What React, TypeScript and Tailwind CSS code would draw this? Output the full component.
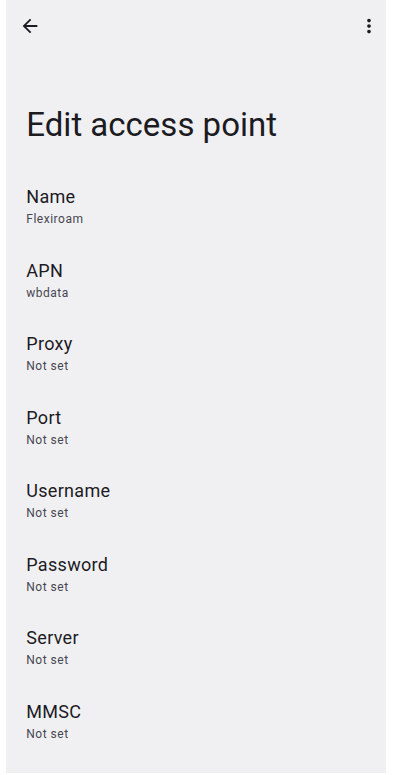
const fields = [
  { label: 'Name', value: 'Flexiroam' },
  { label: 'APN', value: 'wbdata' },
  { label: 'Proxy', value: 'Not set' },
  { label: 'Port', value: 'Not set' },
  { label: 'Username', value: 'Not set' },
  { label: 'Password', value: 'Not set' },
  { label: 'Server', value: 'Not set' },
  { label: 'MMSC', value: 'Not set' },
];

const BackIcon = () => (
  <svg viewBox="0 0 24 24" className="h-[22px] w-[22px]" fill="#1c1b1f">
    <path d="M20 11H7.83l5.59-5.59L12 4l-8 8 8 8 1.41-1.41L7.83 13H20v-2z" />
  </svg>
);

const MoreIcon = () => (
  <svg viewBox="0 0 24 24" className="h-[22px] w-[22px]" fill="#1c1b1f">
    <path d="M12 8c1.1 0 2-.9 2-2s-.9-2-2-2-2 .9-2 2 .9 2 2 2zm0 2c-1.1 0-2 .9-2 2s.9 2 2 2 2-.9 2-2-.9-2-2-2zm0 6c-1.1 0-2 .9-2 2s.9 2 2 2 2-.9 2-2-.9-2-2-2z" />
  </svg>
);

export default function App() {
  return (
    <div className="min-h-[775px] bg-white" style={{ fontFamily: 'Roboto, "Noto Sans", sans-serif' }}>
      <div className="ml-[6px] h-[773px] w-[380px] overflow-hidden bg-[#f0f0f3]">
        <div className="flex items-center justify-between pl-[13.3px] pr-[6.2px] pt-[15px]">
          <BackIcon />
          <MoreIcon />
        </div>

        <h1 className="mt-[68.4px] pl-[20.3px] text-[33px] font-normal leading-[40px] text-[#1c1b1f]">
          Edit access point
        </h1>

        <div className="mt-[40px] flex flex-col pl-[20.3px]">
          {fields.map((f) => (
            <div key={f.label} className="h-[73.5px]">
              <div className="text-[18px] leading-[24px] tracking-[0.3px] text-[#1c1b1f]">{f.label}</div>
              <div className="text-[12px] leading-[20px] tracking-[0.5px] text-[#47464f]">{f.value}</div>
            </div>
          ))}
        </div>
      </div>
    </div>
  );
}
